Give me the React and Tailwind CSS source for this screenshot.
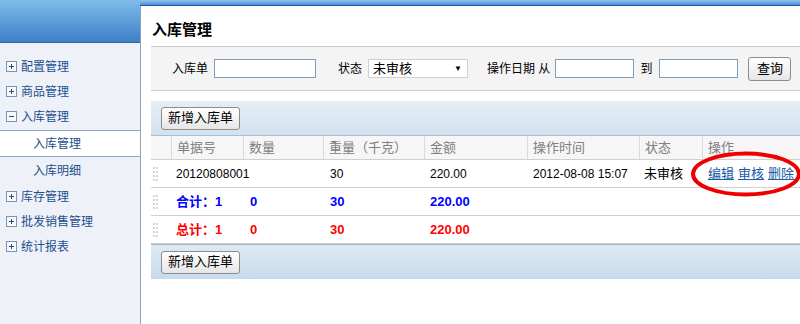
import React from "react";

const FONT = "font-['Liberation_Sans','Noto_Sans_CJK_SC',sans-serif]";

const ToggleIcon = ({ open }) => (
  <svg width="11" height="11" viewBox="0 0 11 11" className="shrink-0">
    <rect x="0.5" y="0.5" width="10" height="10" fill="#f7f9fc" stroke="#7d93b0" />
    <path d="M3 5.5h5" stroke="#1f4f8c" strokeWidth="1" />
    {!open && <path d="M5.5 3v5" stroke="#1f4f8c" strokeWidth="1" />}
  </svg>
);

const menu = [
  { label: "配置管理" },
  { label: "商品管理" },
  { label: "入库管理", open: true, children: [{ label: "入库管理", active: true }, { label: "入库明细" }] },
  { label: "库存管理" },
  { label: "批发销售管理" },
  { label: "统计报表" },
];

const Sidebar = () => (
  <aside className="w-[140px] shrink-0 flex flex-col bg-[#eef2f8]">
    <div className="h-[43px] bg-gradient-to-b from-[#7fbceb] to-[#3c80c6] border-b border-[#2c66a6]" />
    <nav className="pt-[11px] text-[12px] text-[#1d4f8e]">
      {menu.map((item) => (
        <div key={item.label}>
          <div className="h-[25px] flex items-center gap-[4px] pl-[6px]">
            <ToggleIcon open={item.open} />
            <span>{item.label}</span>
          </div>
          {item.children && (
            <div className="pt-[1px]">
              {item.children.map((c) =>
                c.active ? (
                  <div key={c.label} className="h-[27px] flex items-center pl-[33px] bg-white border-y border-[#8ea8c7]">
                    {c.label}
                  </div>
                ) : (
                  <div key={c.label} className="h-[27px] flex items-center pl-[33px]">
                    {c.label}
                  </div>
                )
              )}
            </div>
          )}
        </div>
      ))}
    </nav>
  </aside>
);

const Button = ({ children, className = "" }) => (
  <button
    className={`h-[23px] px-0 flex items-center justify-center whitespace-nowrap text-[13px] text-black rounded-[3px] border border-[#8c8c8c] bg-gradient-to-b from-white to-[#e6e6e6] ${className}`}
  >
    {children}
  </button>
);

const TextInput = ({ w }) => <input className={`block h-[19px] ${w} border border-[#7f9db9] bg-white`} />;

const Grip = () => (
  <svg width="6" height="14" viewBox="0 0 6 14">
    {[0, 1, 2, 3].map((r) =>
      [0, 1].map((c) => <rect key={`${r}${c}`} x={c * 3} y={r * 4} width="2" height="2" fill="#d7d7d7" />)
    )}
  </svg>
);

const COLS = "grid grid-cols-[20px_72px_80px_101px_103px_112px_63px_98px]";
const headers = ["单据号", "数量", "重量（千克）", "金额", "操作时间", "状态", "操作"];

const Toolbar = ({ top }) => (
  <div
    className={`h-[35px] flex items-center pl-[10px] bg-gradient-to-b ${
      top ? "from-[#e6eef6] to-[#d3e2ef] border-b border-[#a7bdd3]" : "from-[#dfe9f2] to-[#c6dbed] border-t border-[#9ab4cc]"
    }`}
  >
    <Button className="w-[79px]">新增入库单</Button>
  </div>
);

const TotalRow = ({ label, color }) => (
  <div className={`${COLS} h-[28px] items-center border-b border-[#d0d0d0] font-bold text-[13px] ${color}`}>
    <div className="pl-[2px] flex items-center"><Grip /></div>
    <div className="pl-[5px]">{label}：1</div>
    <div className="pl-[7px]">0</div>
    <div className="pl-[7px]">30</div>
    <div className="pl-[6px]">220.00</div>
    <div />
    <div />
    <div />
  </div>
);

export default function App() {
  return (
    <div className={`w-[800px] h-[324px] flex overflow-hidden bg-white ${FONT}`}>
      <Sidebar />
      <main className="flex-1 flex flex-col">
        <div className="h-[6px] shrink-0 bg-gradient-to-b from-[#8ec5ef] to-[#4c90d2] border-b border-[#1f5c9e]" />
        <div className="flex-1 border-l border-[#8aa4c2] pl-[10px]">
          <h1 className="h-[40px] flex items-center pt-[9px] pl-[1px] text-[15px] font-bold text-black">入库管理</h1>

          <div className="h-[45px] flex items-center bg-[#f4f4f4] border-y border-[#cccccc] text-[12px] text-black">
            <span className="ml-[21px]">入库单</span>
            <span className="ml-[6px]"><TextInput w="w-[102px]" /></span>
            <span className="ml-[22px]">状态</span>
            <div className="ml-[6px] h-[19px] w-[100px] flex items-center justify-between border border-[#cfcfcf] bg-white pl-[4px] pr-[5px] text-[13px]">
              <span>未审核</span>
              <span className="text-[8px]">▼</span>
            </div>
            <span className="ml-[19px]">操作日期 从</span>
            <span className="ml-[5px]"><TextInput w="w-[79px]" /></span>
            <span className="ml-[6px]">到</span>
            <span className="ml-[7px]"><TextInput w="w-[79px]" /></span>
            <Button className="ml-[10px] w-[43px] h-[24px]">查询</Button>
          </div>

          <div className="mt-[10px]">
            <Toolbar top />
            <div className={`${COLS} h-[24px] bg-[#f6f6f6] border-b border-[#cfcfcf] text-[13px] text-[#808080]`}>
              <div />
              {headers.map((h) => (
                <div key={h} className="border-l border-[#dadada] pl-[5px] flex items-center whitespace-nowrap">{h}</div>
              ))}
            </div>
            <div className={`${COLS} h-[28px] items-center border-b border-[#d0d0d0] text-[12px] text-black`}>
              <div className="pl-[2px] flex items-center"><Grip /></div>
              <div className="pl-[5px]">20120808001</div>
              <div />
              <div className="pl-[7px]">30</div>
              <div className="pl-[6px]">220.00</div>
              <div className="pl-[6px]">2012-08-08 15:07</div>
              <div className="pl-[5px] text-[13px]">未审核</div>
              <div className="relative pl-[6px] flex gap-[4px] text-[13px] text-[#1a5aa6] underline">
                <a>编辑</a>
                <a>审核</a>
                <a>删除</a>
                <svg className="absolute left-[-12px] top-1/2 -translate-y-1/2 pointer-events-none" width="112" height="46" viewBox="0 0 112 46">
                  <ellipse cx="56" cy="23" rx="53" ry="20.5" fill="none" stroke="#ee0000" strokeWidth="4" />
                </svg>
              </div>
            </div>
            <TotalRow label="合计" color="text-[#0000ff]" />
            <TotalRow label="总计" color="text-[#ff0000]" />
            <Toolbar />
          </div>
        </div>
      </main>
    </div>
  );
}
